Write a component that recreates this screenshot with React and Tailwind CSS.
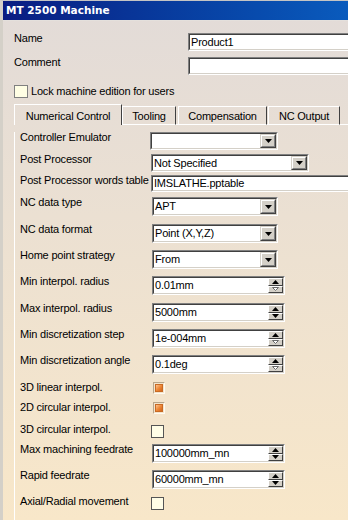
import React from 'react'

const sunkenOuter = 'border border-t-[#808080] border-l-[#808080] border-b-white border-r-white'
const sunkenInner = 'border border-t-[#404040] border-l-[#404040] border-b-[#d4d0c8] border-r-[#d4d0c8]'
const raised = 'border border-t-[#d4d0c8] border-l-[#d4d0c8] border-b-[#404040] border-r-[#404040]'
const raisedInner = 'border border-t-white border-l-white border-b-[#808080] border-r-[#808080]'

function Box({ className = '', children }) {
  return (
    <div className={`${sunkenOuter} ${className} shrink-0`}>
      <div className={`${sunkenInner} h-full bg-white flex items-center overflow-hidden`}>{children}</div>
    </div>
  )
}

function Combo({ className, value }) {
  return (
    <Box className={className}>
      <span className="flex-1 pl-px whitespace-nowrap">{value}</span>
      <div className={`${raised} bg-[#d4d0c8] w-[16px] h-full shrink-0`}>
        <div className={`${raisedInner} h-full flex items-center justify-center`}>
          <svg width="7" height="4" viewBox="0 0 7 4">
            <polygon points="0,0 7,0 3.5,4" fill="#000" />
          </svg>
        </div>
      </div>
    </Box>
  )
}

function SpinBtn({ up, off }) {
  return (
    <div className="flex-1 bg-[#d4d0c8] border border-t-white border-l-white border-b-[#404040] border-r-[#404040] flex items-center justify-center">
      <svg width="7" height="4" viewBox="0 0 7 4">
        {up ? (
          <polygon points="0,4 7,4 3.5,0" fill="#000" />
        ) : off ? (
          <polygon points="0.5,0.5 6.5,0.5 3.5,3.5" fill="#fff" stroke="#6a6a6a" strokeWidth="1" />
        ) : (
          <polygon points="0,0 7,0 3.5,4" fill="#000" />
        )}
      </svg>
    </div>
  )
}

function Spin({ value, downOff }) {
  return (
    <Box className="w-[133px] h-[19px] ml-[2px]">
      <span className="flex-1 pl-px whitespace-nowrap">{value}</span>
      <div className="w-[16px] h-full flex flex-col shrink-0 border-l border-white">
        <SpinBtn up />
        <SpinBtn off={downOff} />
      </div>
    </Box>
  )
}

function OrangeCheck() {
  return (
    <div className="ml-[3px] mt-[-1px] w-[12px] h-[12px] border border-t-[#b8a68c] border-l-[#b8a68c] border-b-[#fffaf0] border-r-[#fffaf0] p-px">
      <div className="w-full h-full border border-[#c86a24] bg-gradient-to-br from-[#fcc48c] via-[#ee8838] to-[#d0641a]" />
    </div>
  )
}

function EmptyCheck({ className = '' }) {
  return <div className={`w-[13px] h-[13px] border border-[#555] bg-[#fffde6] shrink-0 ${className}`} />
}

function Row({ label, className, children }) {
  return (
    <div className={`flex items-start ${className}`}>
      <div className="w-[135px] shrink-0 pl-[5px] -mt-px whitespace-nowrap">{label}</div>
      {children}
    </div>
  )
}

function CheckRow({ label, className, children }) {
  return (
    <div className={`flex items-start ${className}`}>
      <div className="w-[135px] shrink-0 pl-[5px] -mt-[2px] whitespace-nowrap">{label}</div>
      {children}
    </div>
  )
}

export default function App() {
  return (
    <div className="w-[348px] h-[520px] overflow-hidden border-l-[3px] border-t border-l-[#d4d0c8] border-t-[#c4c4c4] bg-gradient-to-b from-[#e2dbd8] to-[#f8e7c9] font-['Liberation_Sans',Arial,sans-serif] text-[11px] leading-[13px] tracking-[-0.2px] text-black">
      <div className="h-[20px] bg-gradient-to-r from-[#0a1c82] to-[#0a5bbd] border-b border-b-[#e4e0dc] flex items-center pl-[3px] text-white font-bold font-['DejaVu_Sans',Verdana,sans-serif] text-[10.5px] tracking-normal">
        MT 2500 Machine
      </div>

      <div className="flex mt-[12px] h-[18px] w-[420px]">
        <div className="w-[185px] shrink-0 pl-[11px] -mt-px">Name</div>
        <Box className="w-[220px] h-[18px]">
          <span className="pl-px">Product1</span>
        </Box>
      </div>
      <div className="flex mt-[6px] h-[18px] w-[420px]">
        <div className="w-[185px] shrink-0 pl-[11px] -mt-px">Comment</div>
        <Box className="w-[220px] h-[18px]" />
      </div>
      <div className="flex items-center mt-[10px] h-[13px] pl-[11px]">
        <div className="w-[14px] h-[13px] border border-[#808080] bg-[#fffee4]" />
        <span className="ml-[3px]">Lock machine edition for users</span>
      </div>

      <div className="ml-[11px] mt-[6px]">
        <div className="flex items-end h-[21px]">
          <div className="w-[108px] h-[21px] border-t border-l border-white border-r border-r-[#404040] pt-[5px] text-center">
            Numerical Control
          </div>
          <div className="w-[54px] h-[19px] border border-t-white border-l-white border-b-white border-r-[#404040] pt-[3px] text-center">
            Tooling
          </div>
          <div className="w-[2px] h-[19px] border-b border-white" />
          <div className="w-[89px] h-[19px] border border-t-white border-l-white border-b-white border-r-[#404040] pt-[3px] text-center">
            Compensation
          </div>
          <div className="w-px h-[19px] border-b border-white" />
          <div className="w-[72px] h-[19px] border border-t-white border-l-white border-b-white border-r-[#404040] pt-[3px] text-center">
            NC Output
          </div>
          <div className="flex-1 border-b border-white" />
        </div>

        <div className="border-l border-white h-[400px]">
          <Row label="Controller Emulator" className="mt-[7px]">
            <Combo className="w-[128px] h-[18px]" value="" />
          </Row>
          <Row label="Post Processor" className="mt-[4px]">
            <Combo className="w-[158px] h-[18px] ml-px" value="Not Specified" />
          </Row>
          <Row label="Post Processor words table" className="mt-[3px] w-[420px]">
            <Box className="w-[240px] h-[17px] ml-px">
              <span className="pl-px">IMSLATHE.pptable</span>
            </Box>
          </Row>
          <Row label="NC data type" className="mt-[5px]">
            <Combo className="w-[126px] h-[19px] ml-[2px]" value="APT" />
          </Row>
          <Row label="NC data format" className="mt-[8px]">
            <Combo className="w-[126px] h-[19px] ml-[2px]" value="Point (X,Y,Z)" />
          </Row>
          <Row label="Home point strategy" className="mt-[7px]">
            <Combo className="w-[126px] h-[19px] ml-[2px]" value="From" />
          </Row>
          <Row label="Min interpol. radius" className="mt-[7px]">
            <Spin value="0.01mm" downOff />
          </Row>
          <Row label="Max interpol. radius" className="mt-[8px]">
            <Spin value="5000mm" />
          </Row>
          <Row label="Min discretization step" className="mt-[7px]">
            <Spin value="1e-004mm" downOff />
          </Row>
          <Row label="Min discretization angle" className="mt-[7px]">
            <Spin value="0.1deg" downOff />
          </Row>
          <CheckRow label="3D linear interpol." className="mt-[9px] h-[11px]">
            <OrangeCheck />
          </CheckRow>
          <CheckRow label="2D circular interpol." className="mt-[9px] h-[11px]">
            <OrangeCheck />
          </CheckRow>
          <CheckRow label="3D circular interpol." className="mt-[11px] h-[13px]">
            <EmptyCheck className="ml-px" />
          </CheckRow>
          <Row label="Max machining feedrate" className="mt-[6px]">
            <Spin value="100000mm_mn" />
          </Row>
          <Row label="Rapid feedrate" className="mt-[7px]">
            <Spin value="60000mm_mn" />
          </Row>
          <CheckRow label="Axial/Radial movement" className="mt-[8px] h-[13px]">
            <EmptyCheck className="ml-px" />
          </CheckRow>
        </div>
      </div>
    </div>
  )
}
